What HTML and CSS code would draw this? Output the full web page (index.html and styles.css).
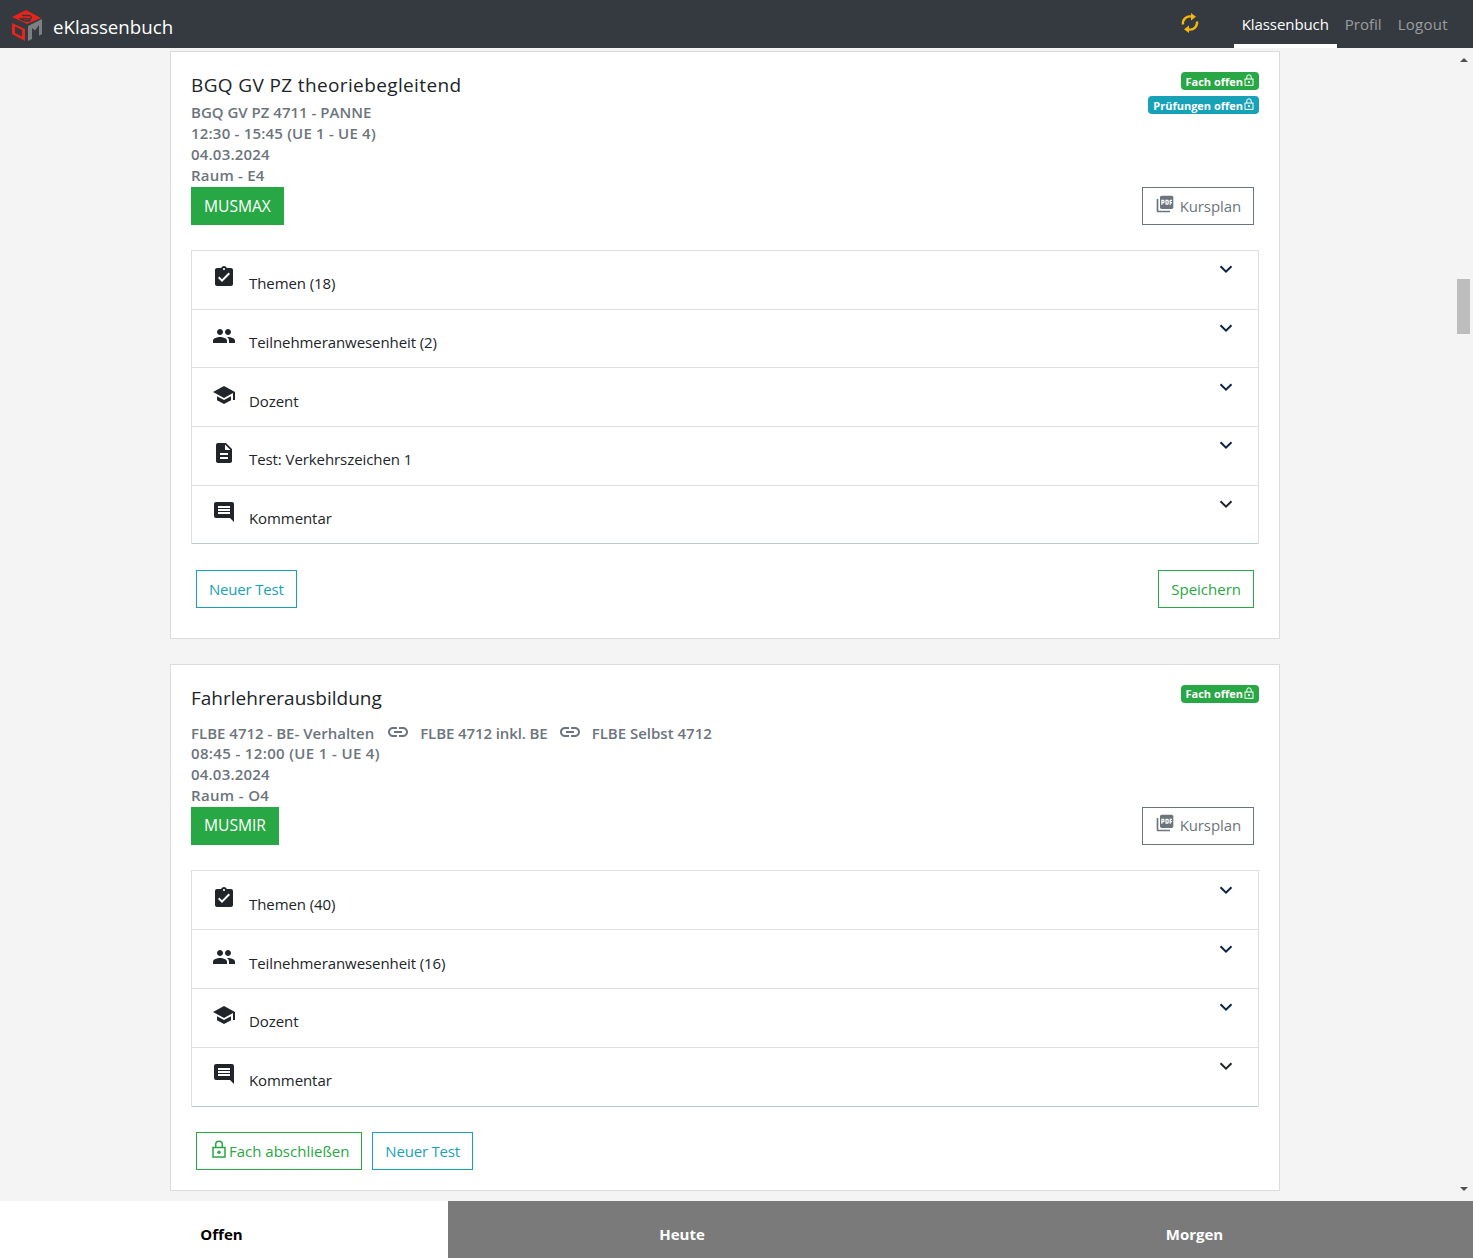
FILE: index.html
```html
<!DOCTYPE html>
<html lang="de">
<head>
<meta charset="utf-8">
<title>eKlassenbuch</title>
<link rel="stylesheet" href="styles.css">
</head>
<body>
<svg class="defs" aria-hidden="true">
  <symbol id="i-task" viewBox="0 0 24 24"><path d="M19 3h-4.18C14.4 1.84 13.3 1 12 1c-1.3 0-2.4.84-2.82 2H5c-1.1 0-2 .9-2 2v14c0 1.1.9 2 2 2h14c1.1 0 2-.9 2-2V5c0-1.1-.9-2-2-2zm-7 0c.55 0 1 .45 1 1s-.45 1-1 1-1-.45-1-1 .45-1 1-1zm-2 14l-4-4 1.41-1.41L10 14.17l6.59-6.59L18 9l-8 8z"/></symbol>
  <symbol id="i-people" viewBox="0 0 24 24"><path d="M16 11c1.66 0 2.99-1.34 2.99-3S17.66 5 16 5c-1.66 0-3 1.34-3 3s1.34 3 3 3zm-8 0c1.66 0 2.99-1.34 2.99-3S9.66 5 8 5C6.34 5 5 6.34 5 8s1.34 3 3 3zm0 2c-2.33 0-7 1.17-7 3.5V19h14v-2.5c0-2.33-4.67-3.5-7-3.5zm8 0c-.29 0-.62.02-.97.05 1.16.84 1.97 1.97 1.97 3.45V19h6v-2.5c0-2.33-4.67-3.5-7-3.5z"/></symbol>
  <symbol id="i-school" viewBox="0 0 24 24"><path d="M5 13.18v4L12 21l7-3.82v-4L12 17l-7-3.82zM12 3L1 9l11 6 9-4.91V17h2V9L12 3z"/></symbol>
  <symbol id="i-doc" viewBox="0 0 24 24"><path d="M14 2H6c-1.1 0-1.99.9-1.99 2L4 20c0 1.1.89 2 1.99 2H18c1.1 0 2-.9 2-2V8l-6-6zm2 16H8v-2h8v2zm0-4H8v-2h8v2zm-3-5V3.5L18.5 9H13z"/></symbol>
  <symbol id="i-comment" viewBox="0 0 24 24"><path d="M21.99 4c0-1.1-.89-2-1.99-2H4c-1.1 0-2 .9-2 2v12c0 1.1.9 2 2 2h14l4 4-.01-18zM18 14H6v-2h12v2zm0-3H6V9h12v2zm0-3H6V6h12v2z"/></symbol>
  <symbol id="i-link" viewBox="0 0 24 24"><path d="M3.9 12c0-1.71 1.39-3.1 3.1-3.1h4V7H7c-2.76 0-5 2.24-5 5s2.24 5 5 5h4v-1.9H7c-1.71 0-3.1-1.39-3.1-3.1zM8 13h8v-2H8v2zm9-6h-4v1.9h4c1.71 0 3.1 1.39 3.1 3.1s-1.39 3.1-3.1 3.1h-4V17h4c2.76 0 5-2.24 5-5s-2.24-5-5-5z"/></symbol>
  <symbol id="i-pdf" viewBox="0 0 24 24"><path d="M20 2H8c-1.1 0-2 .9-2 2v12c0 1.1.9 2 2 2h12c1.1 0 2-.9 2-2V4c0-1.1-.9-2-2-2zm-8.5 7.5c0 .83-.67 1.5-1.5 1.5H9v2H7.5V7H10c.83 0 1.5.67 1.5 1.5v1zm5 2c0 .83-.67 1.5-1.5 1.5h-2.5V7H15c.83 0 1.5.67 1.5 1.5v3zm4-3H19v1h1.5V11H19v2h-1.5V7h3v1.5zM9 9.5h1v-1H9v1zM4 6H2v14c0 1.1.9 2 2 2h14v-2H4V6zm10 5.5h1v-3h-1v3z"/></symbol>
  <symbol id="i-chev" viewBox="0 0 16 16"><path d="M2.5 5.2L8 10.7l5.500-5.500" fill="none" stroke="currentColor" stroke-width="2"/></symbol>
  <symbol id="i-lock" viewBox="0 0 14 18"><path d="M3.700 8V4.500a3.300 3.300 0 0 1 6.600 0V8" fill="none" stroke="currentColor" stroke-width="1.500"/><rect x="1" y="7.500" width="12" height="9.500" fill="none" stroke="currentColor" stroke-width="1.500"/><circle cx="7" cy="12.200" r="1.700" fill="currentColor"/></symbol>
</svg>

<header class="topbar">
  <a class="brand">
    <svg class="logo" viewBox="0 0 30 32">
      <path d="M14 0L29 8 15 14 0 7z" fill="#e8231a"/>
      <path d="M10 5.500h8M7.500 8c3 3 7 3.500 11 2.500M18 5.500c1.500 1 1.500 3 0 3.500l-8-.5" fill="none" stroke="#34393f" stroke-width="1.400"/>
      <path d="M0 13L13 19V31L0 24z" fill="#e8231a"/>
      <path d="M3 16.500l7 3.500v6.500l-7-3.500z" fill="#34393f"/>
      <path d="M16 31V16l14-7v15l-3 1.800V15l-4 5.500L20 18v11z" fill="#7d7f81"/>
    </svg>
    <span class="brand-name">eKlassenbuch</span>
  </a>
  <svg class="sync" viewBox="0 0 24 24">
    <path class="sync-arc" d="M5 13.500A7 7 0 0 1 13 5.500"/>
    <path d="M13 2L18 5.800 13 9.500z"/>
    <path class="sync-arc" d="M19 10.500A7 7 0 0 1 11 18.500"/>
    <path d="M11 22L6 18.200 11 14.500z"/>
  </svg>
  <nav class="mainnav">
    <a class="navlink active">Klassenbuch</a>
    <a class="navlink">Profil</a>
    <a class="navlink wide">Logout</a>
  </nav>
</header>

<main class="content">
  <div class="column">
    <section class="card">
      <div class="card-head">
        <div class="head-text">
          <h5 class="title title-wide">BGQ GV PZ theoriebegleitend</h5>
          <div class="sub">BGQ GV PZ 4711 - PANNE</div>
          <div class="sub sub-num">12:30 - 15:45 (UE 1 - UE 4)</div>
          <div class="sub sub-num">04.03.2024</div>
          <div class="sub sub-num">Raum - E4</div>
        </div>
        <div class="badges">
          <span class="badge green">Fach offen<svg class="badge-lock"><use href="#i-lock"/></svg></span>
          <span class="badge teal">Prüfungen offen<svg class="badge-lock"><use href="#i-lock"/></svg></span>
        </div>
      </div>
      <div class="actions-row">
        <span class="btn solid-green">MUSMAX</span>
        <span class="btn outline-gray"><svg class="pdf"><use href="#i-pdf"/></svg>Kursplan</span>
      </div>
      <div class="accordion">
        <div class="acc-row"><svg class="acc-icon"><use href="#i-task"/></svg><span class="acc-label">Themen (18)</span><svg class="chev"><use href="#i-chev"/></svg></div>
        <div class="acc-row"><svg class="acc-icon"><use href="#i-people"/></svg><span class="acc-label">Teilnehmeranwesenheit (2)</span><svg class="chev"><use href="#i-chev"/></svg></div>
        <div class="acc-row"><svg class="acc-icon"><use href="#i-school"/></svg><span class="acc-label">Dozent</span><svg class="chev"><use href="#i-chev"/></svg></div>
        <div class="acc-row"><svg class="acc-icon"><use href="#i-doc"/></svg><span class="acc-label">Test: Verkehrszeichen 1</span><svg class="chev"><use href="#i-chev"/></svg></div>
        <div class="acc-row last"><svg class="acc-icon"><use href="#i-comment"/></svg><span class="acc-label">Kommentar</span><svg class="chev"><use href="#i-chev"/></svg></div>
      </div>
      <div class="footer-row">
        <span class="btn outline-teal">Neuer Test</span>
        <span class="btn outline-green push">Speichern</span>
      </div>
    </section>

    <section class="card">
      <div class="card-head">
        <div class="head-text">
          <h5 class="title">Fahrlehrerausbildung</h5>
          <div class="sub sub-links"><span>FLBE 4712 - BE- Verhalten</span><svg class="link link-first"><use href="#i-link"/></svg><span class="squeeze">FLBE 4712 inkl. BE</span><svg class="link"><use href="#i-link"/></svg><span>FLBE Selbst 4712</span></div>
          <div class="sub sub-num2">08:45 - 12:00 (UE 1 - UE 4)</div>
          <div class="sub sub-num">04.03.2024</div>
          <div class="sub sub-num2">Raum - O4</div>
        </div>
        <div class="badges">
          <span class="badge green">Fach offen<svg class="badge-lock"><use href="#i-lock"/></svg></span>
        </div>
      </div>
      <div class="actions-row">
        <span class="btn solid-green">MUSMIR</span>
        <span class="btn outline-gray"><svg class="pdf"><use href="#i-pdf"/></svg>Kursplan</span>
      </div>
      <div class="accordion roomy">
        <div class="acc-row"><svg class="acc-icon"><use href="#i-task"/></svg><span class="acc-label">Themen (40)</span><svg class="chev"><use href="#i-chev"/></svg></div>
        <div class="acc-row"><svg class="acc-icon"><use href="#i-people"/></svg><span class="acc-label">Teilnehmeranwesenheit (16)</span><svg class="chev"><use href="#i-chev"/></svg></div>
        <div class="acc-row"><svg class="acc-icon"><use href="#i-school"/></svg><span class="acc-label">Dozent</span><svg class="chev"><use href="#i-chev"/></svg></div>
        <div class="acc-row last"><svg class="acc-icon"><use href="#i-comment"/></svg><span class="acc-label">Kommentar</span><svg class="chev"><use href="#i-chev"/></svg></div>
      </div>
      <div class="footer-row tight">
        <span class="btn outline-green"><svg class="btn-lock"><use href="#i-lock"/></svg>Fach abschließen</span>
        <span class="btn outline-teal">Neuer Test</span>
      </div>
    </section>
  </div>
  <div class="scrollbar" aria-hidden="true">
    <span class="arrow up"></span>
    <span class="thumb"></span>
    <span class="arrow down"></span>
  </div>
</main>

<footer class="tabs">
  <a class="tab active">Offen</a>
  <a class="tab">Heute</a>
  <a class="tab">Morgen</a>
</footer>
</body>
</html>
```
FILE: styles.css
```css
* { box-sizing: border-box; }
html, body { height: 100%; }
body {
  margin: 0;
  height: 100vh;
  display: flex;
  flex-direction: column;
  overflow: hidden;
  background: #f4f4f4;
  color: #212529;
  font-family: "Open Sans", "Noto Sans", sans-serif;
  font-size: 15px;
  line-height: 21px;
}
.defs { display: none; }

.topbar {
  flex: none;
  height: 48px;
  background: #343a40;
  display: flex;
  align-items: center;
  padding-left: 12px;
  padding-right: 17px;
}
.brand { display: flex; align-items: center; }
.logo { width: 30px; height: 32px; margin-right: 11px; margin-top: 4px; }
.brand-name { color: #fff; font-size: 18.700px; line-height: 24px; margin-top: 6px; }
.sync { width: 24px; height: 24px; fill: #f5b50f; margin-left: auto; margin-right: 32px; margin-top: -2px; }
.sync-arc { fill: none; stroke: #f5b50f; stroke-width: 2.400; }
.mainnav { display: flex; height: 100%; }
.navlink {
  padding: 0 8px;
  color: rgba(255, 255, 255, .5);
  line-height: 48px;
  border-bottom: 4px solid transparent;
}
.navlink.active { color: #fff; border-bottom-color: #fff; letter-spacing: -.08px; }
.navlink.wide { letter-spacing: .3px; }

.content { flex: 1; min-height: 0; position: relative; overflow: hidden; padding: 3px 0 0 170px; }
.column { width: 1110px; }
.card {
  background: #fff;
  border: 1px solid #dcdcdc;
  padding: 20px 20px 30px;
  margin-bottom: 24.500px;
}
.card-head { display: flex; justify-content: space-between; }
.head-text { margin-bottom: 1px; }
.title { margin: 0 0 3px; font-size: 19px; line-height: 27px; font-weight: 500; }
.title-wide { letter-spacing: .37px; }
.sub { color: #6c757d; font-weight: 600; }
.sub-num { letter-spacing: .2px; }
.sub-num2 { letter-spacing: .35px; }
.sub-links { line-height: 26px; margin-top: 8px; margin-bottom: -3px; display: flex; align-items: center; }
.squeeze { letter-spacing: -.1px; }
.link { width: 24px; height: 24px; fill: #6c757d; margin: -2px 10px 0 10px; }
.link-first { margin-left: 12px; }
.badges { display: flex; flex-direction: column; align-items: flex-end; gap: 6px; }
.badge {
  display: inline-flex;
  align-items: center;
  height: 18px;
  padding: 0 5px;
  border-radius: 4px;
  color: #fff;
  font-size: 11px;
  font-weight: 700;
}
.badge.green { background: #28a745; }
.badge.teal { background: #17a2b8; }
.badge-lock { width: 10px; height: 12px; margin-left: 1px; margin-top: -2px; }

.actions-row { display: flex; justify-content: space-between; padding-right: 5px; }
.btn {
  display: inline-flex;
  align-items: center;
  height: 38px;
  padding: 0 12px;
  border: 1px solid transparent;
  white-space: nowrap;
}
.solid-green { background: #28a745; color: #fff; font-size: 15.600px; }
.outline-gray { border-color: #6c757d; color: #6c757d; letter-spacing: -.1px; }
.outline-teal { border-color: #17a2b8; color: #17a2b8; letter-spacing: -.2px; }
.outline-green { border-color: #28a745; color: #28a745; }
.pdf { width: 20px; height: 20px; fill: #6c757d; margin: -5px 5px 0 0; }
.btn-lock { width: 14px; height: 18px; margin: -5px 3px 0 3px; }

.accordion { margin-top: 25px; border: 1px solid #dfdfdf; border-bottom: 0; }
.acc-row {
  height: 58.700px;
  display: flex;
  align-items: flex-start;
  padding: 14.300px 24px 0 20px;
  border-bottom: 1px solid #dfdfdf;
}
.roomy .acc-row { height: 59px; padding-top: 14.500px; }
.roomy .acc-row:nth-child(-n+2) { padding-top: 15.500px; }
.acc-row.last { border-bottom-color: #b9cbcb; }
.acc-icon { width: 24px; height: 24px; fill: #212529; flex: none; }
.acc-label { margin: 8px 0 0 13px; letter-spacing: -.08px; }
.chev { width: 16px; height: 16px; margin: -4px 0 0 auto; color: #0b2545; }
.acc-row.last .chev { color: #212529; }

.footer-row { display: flex; padding: 26px 5px 0; }
.footer-row.tight { gap: 10px; padding-top: 25px; }
.tight .btn { padding-top: 1px; }
.card:last-child { padding-bottom: 20px; }
.push { margin-left: auto; }

.scrollbar {
  position: absolute;
  top: 0;
  right: 0;
  bottom: 0;
  width: 17px;
}
.arrow { position: absolute; left: 4px; width: 0; height: 0; border-left: 4px solid transparent; border-right: 4px solid transparent; }
.arrow.up { top: 10px; border-bottom: 4px solid #505050; }
.arrow.down { bottom: 10px; border-top: 4px solid #505050; }
.thumb { position: absolute; top: 231px; left: 1px; width: 13px; height: 55px; background: #bdbdbd; }

.tabs {
  flex: none;
  height: 57px;
  display: grid;
  grid-template-columns: 448px 468px 1fr;
  background: #7a7a7a;
}
.tab {
  color: #fff;
  font-weight: 700;
  text-align: center;
  padding-top: 23px;
}
.tab.active { background: #fff; color: #000; padding-right: 5px; }
```
